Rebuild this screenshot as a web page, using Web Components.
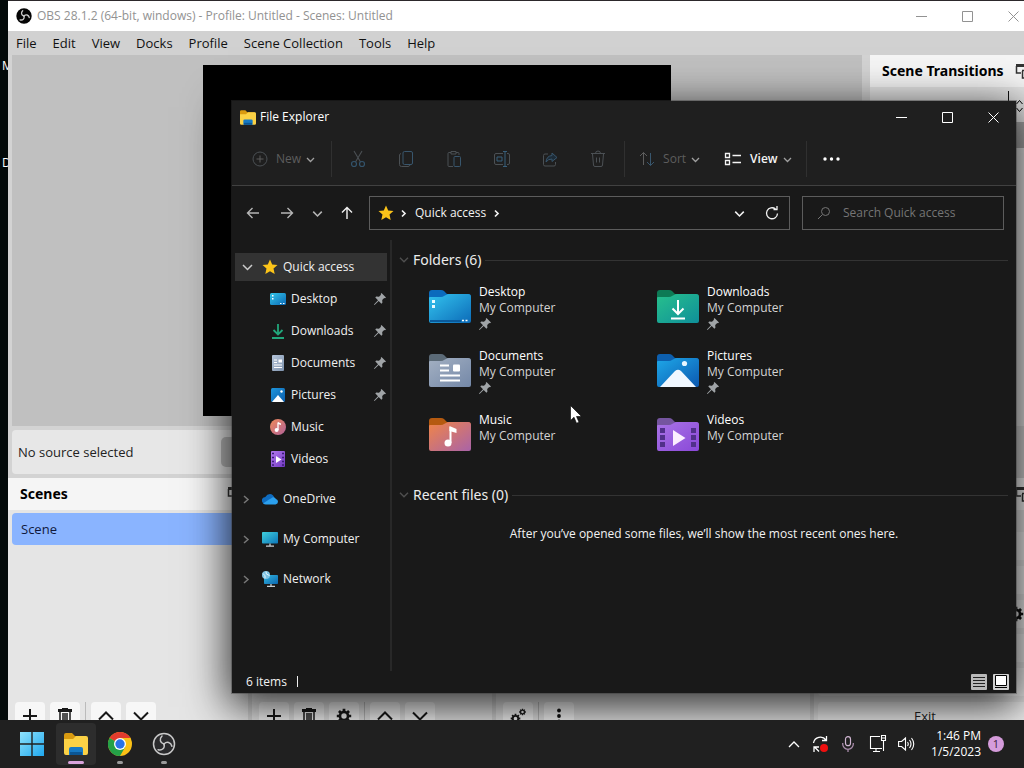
<!DOCTYPE html>
<html lang="en">
<head>
<meta charset="utf-8">
<meta name="viewport" content="width=device-width, initial-scale=1">
<title>Desktop</title>
<style>
  html, body { height: 100%; }
  body { margin: 0; background: #000; overflow: hidden; font: 12px/16px "Open Sans", "Noto Sans", sans-serif; }
</style>
</head>
<body>
<desktop-shell></desktop-shell>
<script>
const RESET = `
  *, *::before, *::after { box-sizing: border-box; }
  button, input { font: inherit; color: inherit; background: none; border: 0; margin: 0; padding: 0; }
  button { display: flex; align-items: center; justify-content: center; white-space: nowrap; }
  a { color: inherit; text-decoration: none; }
`;

function define(name, css, html) {
  const template = document.createElement('template');
  const render = el => {
    template.innerHTML = `<style>${RESET}${css}</style>${typeof html === 'function' ? html(el) : html}`;
    el.shadowRoot.append(template.content.cloneNode(true));
  };
  customElements.define(name, class extends HTMLElement {
    connectedCallback() {
      if (this.shadowRoot) return;
      this.attachShadow({ mode: 'open' });
      render(this);
    }
  });
}

/* ---------- icons: name -> [width, height, markup] ---------- */
const line = (d, w = 1, extra = '') => `<path d="${d}" fill="none" stroke="currentColor" stroke-width="${w}" ${extra}/>`;
const grad = (id, a, b) => `<linearGradient id="${id}" x1="0" y1="0" x2="1" y2="1"><stop offset="0" stop-color="${a}"/><stop offset="1" stop-color="${b}"/></linearGradient>`;
const folder = (tab, a, b, inner) => [43, 34, `
  <defs>${grad('g', a, b)}</defs>
  <path d="M1 3q0-3 3-3h9q2 0 3 1l3 3h21q3 0 3 3v6H1z" fill="${tab}"/>
  <path d="M1 8q0-1 1-1h11q2 0 3-1l2-1q1-1 3-1h19q3 0 3 3v24q0 2-2 2H3q-2 0-2-2z" fill="url(#g)"/>${inner}`];
const obsBlades = (c, w) => `<g fill="none" stroke="${c}" stroke-width="${w}" stroke-linecap="round">
  <path d="M12 12c-4-1-5-5-2-8"/><path d="M12 12c-4-1-5-5-2-8" transform="rotate(120 12 12)"/><path d="M12 12c-4-1-5-5-2-8" transform="rotate(240 12 12)"/></g>`;
const gear = (x, y, s) => `<g transform="translate(${x} ${y}) scale(${s})"><circle r="4.5" fill="none" stroke="currentColor" stroke-width="3"/>
  <path d="M0-8v3M0 8V5M-8 0h3M8 0H5M-5.6-5.6l2 2M5.6 5.6l-2-2M-5.6 5.6l2-2M5.6-5.6l-2 2" stroke="currentColor" stroke-width="3"/></g>`;

const ICONS = {
  minimize: [11, 11, line('M0 5.5h11')],
  maximize: [11, 11, line('M.5.5h10v10H.5z')],
  close: [11, 11, line('M.5.5l10 10M10.5.5l-10 10')],
  chevDown: [9, 9, line('M1 3l3.5 3.5L8 3', 1.3)],
  chevRight: [9, 9, line('M3 1.5l3 3-3 3', 1.7)],
  treeRight: [9, 11, line('M2 2l4 3.5L2 9', 1.5)],
  treeDown: [11, 9, line('M1 2l4.5 4.5L10 2', 1.5)],
  chevUp: [12, 12, line('M1 9l5-5 5 5', 1.3)],
  back: [14, 14, line('M13 7H1.5M6.5 2l-5 5 5 5', 1.4)],
  forward: [14, 14, line('M1 7h11.500M7.500 2l5 5-5 5', 1.4)],
  up: [14, 14, line('M7 13V1.500M2 6.500l5-5 5 5', 1.4)],
  refresh: [16, 16, line('M13.500 8.500A5.500 5.500 0 1 1 11.500 4M9.500 4.500h3.500V1', 1.3)],
  search: [14, 14, line('M1 13l4-4M12.500 5.500a4 4 0 1 1-8 0 4 4 0 0 1 8 0z')],
  star: [16, 16, '<path d="M8 .5l2.200 5 5.300.5-4 3.600 1.200 5.400L8 12.200 3.300 15l1.200-5.400-4-3.600 5.300-.5z" fill="#fcc419"/>'],
  pin: [12, 12, '<path d="M7.500 0L12 4.500l-1 .8-.8-.2-2 2 .2 2.700-1 .9L4.700 8 .8 11.800 0 12l.2-.8L4 7.300 1.300 4.600l.9-1L5 3.800l2-2-.3-.8z" fill="#a0a4a7"/>'],
  plusCircle: [16, 16, `<circle cx="8" cy="8" r="7" fill="none" stroke="#4b5054"/>` + line('M8 4.500v7M4.500 8h7')],
  cut: [16, 18, line('M4 1l6.500 11M12 1L5.500 12', 1.1) + '<g fill="none" stroke="#33536b" stroke-width="1.200"><circle cx="4" cy="14" r="2.500"/><circle cx="12" cy="14" r="2.500"/></g>'],
  copy: [16, 18, '<rect x="5" y="1.500" width="9.500" height="13" rx="1.500" fill="none" stroke="#38566d"/>' + line('M3 3.500Q1.500 4 1.500 5v9.500q0 2 2 2H10q1.500 0 2-1.500')],
  paste: [16, 18, line('M5 2.500H3q-1 0-1 1v12q0 1 1 1h4M10 2.500h2q1 0 1 1V5M5 1.500h5v2.500H5z') + '<rect x="8" y="6.500" width="6.500" height="10" rx="1" fill="none" stroke="#38566d"/>'],
  rename: [18, 16, line('M10 2.500H3q-1.500 0-1.500 1.500v8q0 1.500 1.500 1.500h7M14 2.500h1q1.500 0 1.500 1.500v8q0 1.500-1.500 1.500h-1') + '<path d="M10 .5h4M12 .5v15M10 15.500h4M4 6h5v4H4z" fill="none" stroke="#38607c"/>'],
  share: [16, 16, line('M6 3H3Q1.500 3 1.500 4.500v9Q1.500 15 3 15h9q1.500 0 1.500-1.500V11') + '<path d="M10 2l5 4.500-5 4V8Q6 8 4 11q.5-6 6-6.500z" fill="#1d2c38" stroke="#38566d"/>'],
  trash: [16, 18, line('M1 3.500h14M5.500 3.500q0-2.500 2.500-2.500t2.500 2.500M2.500 4l1 11q0 1.500 1.500 1.500h6q1.500 0 1.500-1.500l1-11M6.500 7.500v5M9.500 7.500v5')],
  sort: [16, 16, line('M4.500 14V1.500M1 5l3.500-3.500L8 5') + '<path d="M11.500 2v12.500M8 11l3.500 3.500L15 11" fill="none" stroke="#38566d"/>'],
  view: [18, 14, line('M1.500 1.500h4v4h-4zM1.500 8.500h4v4h-4zM8.500 3.500H17M8.500 10.500H17', 1.3)],
  dots: [17, 4, '<g fill="currentColor"><circle cx="2" cy="2" r="1.700"/><circle cx="8.500" cy="2" r="1.700"/><circle cx="15" cy="2" r="1.700"/></g>'],

  explorer: [24, 22, `<path d="M0 2q0-2 2-2h6l3 3h11v6H0z" fill="#d99a10"/><path d="M0 6h9l3-3h10q2 0 2 2v15q0 2-2 2H2q-2 0-2-2z" fill="#fbd145"/><path d="M5 22v-6q0-2 2-2h10q2 0 2 2v6z" fill="#1679c4"/><path d="M6 19h12v3H6z" fill="#0b5694"/>`],
  desktop: [16, 16, `<defs>${grad('g', '#35c6e8', '#0a69b7')}</defs><rect y="2" width="16" height="12" rx="1.500" fill="url(#g)"/><path d="M2 4h1.500v1.500H2zM2 7h1.500v1.500H2zM10 12h1.500v1H10zM13 12h1.500v1H13z" fill="#fff"/>`],
  downloads: [16, 16, '<path d="M8 1v10M3.500 7L8 11.500 12.500 7M2 15h12" fill="none" stroke="#22a67b" stroke-width="1.800"/>'],
  documents: [16, 16, `<defs>${grad('g', '#b5c5da', '#7f93ad')}</defs><rect x="2" width="12" height="16" rx="1" fill="url(#g)"/><path d="M4 5h3M4 7.500h3M4 10h8M4 12.500h8M8.500 5H12M8.500 6H12M8.500 7H12" stroke="#fff" stroke-width="1.200"/>`],
  pictures: [16, 16, `<defs>${grad('g', '#1e96dd', '#0b5dab')}</defs><rect x="1" y="1" width="14" height="14" rx="1.500" fill="url(#g)"/><path d="M2 15l6-7 6 7z" fill="#fff"/><circle cx="11.500" cy="4.500" r="1.200" fill="#fff"/>`],
  music: [16, 16, `<defs>${grad('g', '#f08a58', '#b0629a')}</defs><circle cx="8" cy="8" r="8" fill="url(#g)"/><path d="M8 3.500V11" stroke="#fff" stroke-width="1.300"/><path d="M8 3l3 1.500V6L8 5z" fill="#fff"/><circle cx="6.600" cy="11" r="2" fill="#fff"/>`],
  videos: [16, 16, `<defs>${grad('g', '#b479f0', '#7038c0')}</defs><rect x="1" width="14" height="16" rx="1" fill="url(#g)"/><path d="M6 5l5.500 3.500L6 12z" fill="#fff"/><path d="M2 2.500h2M2 6.500h2M2 10.500h2M2 14h2M12 2.500h2M12 6.500h2M12 10.500h2M12 14h2" stroke="#3b1c78" stroke-width="1.600"/>`],
  onedrive: [16, 16, '<path d="M3.500 13a3.500 3.500 0 0 1-.2-7Q5 3 8 3t4.300 3.500L8 13z" fill="#0f6cc0"/><path d="M4 13.500q-1.500 0-3-1l6-4 2-1q3-2.500 5 .5 2 .5 2 2.700t-2.500 2.800z" fill="#2ba0ee"/>'],
  computer: [16, 16, `<defs>${grad('g', '#3fd0dd', '#0d76b9')}</defs><rect y="1" width="16" height="11.500" rx=".8" fill="url(#g)"/><path d="M8 12.500V15M4 15.200h8" stroke="#c5cdd2" stroke-width="1.300"/>`],
  network: [16, 16, `<defs>${grad('g', '#33b8e0', '#0b66b0')}</defs><rect x="2" y="4" width="14" height="9" rx=".8" fill="url(#g)"/><path d="M9 13v2M5 15.300h8" stroke="#c5cdd2" stroke-width="1.300"/><circle cx="4" cy="4" r="4" fill="#7fc4e4"/><path d="M1 2.500q3 2 2 5M4 .5q-1 3 3.500 4" stroke="#e6f6fc" fill="none"/>`],

  bigDesktop: folder('#0b6bbd', '#33c3ee', '#0c6bb8', '<path d="M4 10h3v3H4zM4 15h3v3H4z" fill="#e9faff"/><path d="M2 31h31" stroke="#0a5a9b" stroke-width="2"/><path d="M34 30.500h2M37.500 30.500h2" stroke="#fff" stroke-width="1.500"/>'),
  bigDownloads: folder('#0d7a55', '#27c08c', '#0f8f9a', '<path d="M22 10v14M16.500 18.500L22 24l5.500-5.500M15 28.500h14" fill="none" stroke="#fff" stroke-width="2"/>'),
  bigDocuments: folder('#5b6a77', '#a3b0c2', '#7488a8', '<path d="M12 11.500h9M12 16.500h9M12 21.500h20M12 26.500h20" stroke="#fff" stroke-width="2"/><rect x="25" y="10.500" width="7" height="7" rx="1" fill="#fff"/>'),
  bigPictures: folder('#0d5fae', '#1ea8e8', '#0c58b0', '<path d="M4 33l15-16q3-2.500 6 0l15 16z" fill="#f0f7ff"/><circle cx="28.500" cy="9.500" r="2.600" fill="#e8f6ff"/>'),
  bigMusic: folder('#b55a10', '#f08548', '#a963a8', '<circle cx="20" cy="25" r="3.500" fill="#fff"/><path d="M22.500 25V9" stroke="#fff" stroke-width="2"/><path d="M21.500 8l7 3v4l-7-2z" fill="#fff"/>'),
  bigVideos: folder('#75559f', '#a974e6', '#8a48d8', '<path d="M17 12l12.500 8L17 28z" fill="#fbeeff"/><path d="M4 10h5v5H4zM4 17h5v5H4zM4 24h5v5H4zM35 10h5v5h-5zM35 17h5v5h-5zM35 24h5v5h-5z" fill="#51308a"/>'),

  listView: [16, 16, '<rect width="16" height="16" rx="1" fill="#b9b9b9"/><path d="M2 3.500h12M2 6.500h12M2 9.500h12M2 12.500h12" stroke="#222"/>'],
  tileView: [16, 16, '<rect width="16" height="16" rx="1" fill="#d0d0d0"/><path d="M2.500 1.500h11v10h-11z" fill="#fff" stroke="#000"/><path d="M2 13.500h12" stroke="#000"/>'],

  obs: [16, 16, `<g transform="scale(.667)"><circle cx="12" cy="12" r="11.500" fill="#050505"/>${obsBlades('#c8c8c8', 2)}</g>`],
  obsTask: [24, 24, `<circle cx="12" cy="12" r="10.500" fill="#2a2a2c" stroke="#c9c9c9" stroke-width="1.500"/>${obsBlades('#c9c9c9', 1.5)}`],
  undock: [16, 16, line('M1 2.500h12', 3) + line('M1.500 3v7H6M13.500 3v3M7 7.500h9M7.500 8v7H15', 1.5)],
  plus: [16, 16, line('M8 1v14M1 8h14', 2)],
  bin: [16, 16, line('M1 2.500h14', 3) + line('M5 1h6', 2) + line('M3 4v12M6 5v10M8 5v10M10 5v10M13 4v12M3 15h10', 1.5)],
  moveUp: [16, 16, line('M1 11.500l7-7 7 7', 2)],
  moveDown: [16, 16, line('M1 4.500l7 7 7-7', 2)],
  gear: [16, 16, gear(8, 8, .9)],
  gears: [16, 16, gear(5.5, 10.5, .6) + gear(12.5, 4, .42)],
  kebab: [4, 16, '<g fill="#111"><circle cx="2" cy="2.500" r="1.900"/><circle cx="2" cy="8" r="1.900"/><circle cx="2" cy="13.500" r="1.900"/></g>'],
  spin: [9, 14, line('M1.500 5l3-3.500 3 3.500M1.500 9l3 3.500 3-3.500')],

  start: [24, 24, `<defs>${grad('g', '#8fe3fc', '#1fa7ee')}</defs><path d="M0 0h11.300v11.300H0zM12.700 0H24v11.300H12.700zM0 12.700h11.300V24H0zM12.700 12.700H24V24H12.700z" fill="url(#g)"/>`],
  chrome: [24, 24, '<circle cx="12" cy="12" r="12" fill="#fbc116"/><path d="M12 12L1.600 6A12 12 0 0 1 22.400 6z" fill="#e33b2e"/><path d="M1.600 6A12 12 0 0 0 12 24l5.200-9L12 12z" fill="#24a148"/><path d="M12 6h10.400a12 12 0 0 1 .8 2L17 15z" fill="#fbc116"/><circle cx="12" cy="12" r="6" fill="#fff"/><circle cx="12" cy="12" r="4.700" fill="#2a72e8"/>'],
  sync: [17, 18, line('M1.500 8A7 7 0 0 1 14 5M14.500 1v4.500H10M2 17v-5h5M2.500 12l4.500 4.500', 1.3) + '<circle cx="12" cy="13" r="4" fill="#f00f0f"/>'],
  mic: [12, 16, '<rect x="3.500" y=".7" width="5" height="9" rx="2.500" fill="none" stroke="#d0b6d2" stroke-width="1.200"/><path d="M.7 7v1a5.300 5.300 0 0 0 10.600 0V7M6 13v3" fill="none" stroke="#a98cab" stroke-width="1.300"/>'],
  monitor: [18, 18, line('M11 1.500H1.500v12H13M7 14v3M4 16.500h7M12.500.5h4v5h-4zM12.500 3h4M14.500 6v10', 1.1)],
  speaker: [17, 16, line('M.6 5.500h3L7.500 2v12L3.600 10.500h-3zM9.500 6q1.500 2 0 4M11.500 4q3 4 0 8M13.500 2q4.500 6 0 12', 1.1)],
  cursor: [12, 20, '<path d="M.5.5v15l3.500-3.300 2.500 6 2.500-1-2.500-5.700h5z" fill="#fff" stroke="#000" stroke-width=".6"/>'],
};

define('ui-icon', ':host{display:inline-flex;flex:none} svg{display:block}', el => {
  const [w, h, body] = ICONS[el.getAttribute('name')];
  const width = Number(el.getAttribute('width') || w);
  return `<svg viewBox="0 0 ${w} ${h}" width="${width}" height="${Math.round(h * width / w)}" aria-hidden="true">${body}</svg>`;
});

define('window-controls', `
  :host { display: flex; align-self: stretch; }
  button { width: 46px; }`,
  `<button aria-label="Minimize"><ui-icon name="minimize"></ui-icon></button>
   <button aria-label="Maximize"><ui-icon name="maximize"></ui-icon></button>
   <button aria-label="Close"><ui-icon name="close"></ui-icon></button>`);

/* ---------- OBS ---------- */
define('obs-dock', `
  :host { display: flex; flex-direction: column; min-width: 0; background: #e5e5e5; color: #000; }
  header { display: flex; align-items: center; justify-content: space-between; height: 32px; padding: 0 5px 0 12px; background: #f5f5f5; }
  h2 { margin: 0; font: 700 14px/20px "Noto Sans", sans-serif; white-space: nowrap; }
  ui-icon { color: #333; }
  .body { flex: 1; display: flex; flex-direction: column; padding: 3px 4px 4px; }`,
  el => `<header><h2>${el.getAttribute('label') || ''}</h2><ui-icon name="undock"></ui-icon></header>
   <div class="body"><slot></slot></div>`);

define('obs-toolbar', `
  :host { display: flex; gap: 5px; margin-top: auto; padding-left: 3px; color: #181818; }
  button { width: 30px; height: 28px; border-radius: 4px; background: #f7f7f7; }
  i { width: 1px; background: #bbb; }`,
  el => el.getAttribute('items').split(' ').map(n => n === '|' ? '<i></i>' : `<button aria-label="${n}"><ui-icon name="${n}"></ui-icon></button>`).join(''));

define('obs-window', `
  :host { display: grid; grid-template-rows: 30px 24px 371px 44px minmax(0, 1fr); background: #d3d3d3; border-top: 1px solid #2c282b; font-size: 13px; line-height: 18px; }
  .title { display: flex; align-items: center; gap: 5px; padding-left: 8px; background: #fff; color: #929292; font-size: 12px; }
  .title span { flex: 1; white-space: nowrap; }
  nav { display: flex; align-items: center; gap: 16px; padding: 0 8px; background: #d1d1d1; color: #111; }
  .stage { display: grid; grid-template-columns: minmax(0, 1fr) 166px; column-gap: 8px; padding-left: 4px; }
  .preview { display: flex; justify-content: center; padding: 10px 0; background: #c0c0c0; }
  .canvas { aspect-ratio: 4 / 3; height: 100%; background: #000; }
  .combo { display: flex; justify-content: flex-end; align-items: center; height: 32px; padding-right: 8px; }
  .combo i { width: 1px; height: 18px; margin: 0 6px 12px 0; background: #111; }
  .strip { height: 26px; background: #a8a8a8; margin: 0 -4px; }
  .source { display: flex; align-items: center; justify-content: space-between; margin: 4px 174px -4px 4px; padding: 0 6px; border-radius: 4px; background: #e7e7e7; color: #222; }
  .source button { width: 90px; height: 30px; margin-right: 545px; border-radius: 5px; background: #b9b9b9; }
  .docks { display: grid; grid-template-columns: 240px 240px minmax(0, 1fr) 222px; column-gap: 4px; margin-top: 8px; }
  .scene { display: block; height: 32px; padding: 7px 9px; border-radius: 4px; background: #8ab4ff; color: #10183c; }
  .controls { display: flex; flex-direction: column; gap: 6px; margin-top: auto; }
  .controls div { display: flex; gap: 4px; }
  .controls button { flex: none; height: 28px; border-radius: 4px; background: #f0f0f0; color: #222; }
  .controls div button { flex: 1; }
  .controls .small { flex: 0 0 32px; color: #111; }`,
  `<div class="title"><ui-icon name="obs"></ui-icon><span>OBS 28.1.2 (64-bit, windows) - Profile: Untitled - Scenes: Untitled</span><window-controls></window-controls></div>
   <nav><a href="#">File</a><a href="#">Edit</a><a href="#">View</a><a href="#">Docks</a><a href="#">Profile</a><a href="#">Scene Collection</a><a href="#">Tools</a><a href="#">Help</a></nav>
   <div class="stage">
     <div class="preview"><div class="canvas"></div></div>
     <obs-dock label="Scene Transitions"><div class="combo"><i></i><ui-icon name="spin"></ui-icon></div><div class="strip"></div></obs-dock>
   </div>
   <div class="source"><span>No source selected</span><button aria-label="Properties"></button></div>
   <div class="docks">
     <obs-dock label="Scenes"><a class="scene" href="#">Scene</a><obs-toolbar items="plus bin | moveUp moveDown"></obs-toolbar></obs-dock>
     <obs-dock><obs-toolbar items="plus bin gear | moveUp moveDown"></obs-toolbar></obs-dock>
     <obs-dock><obs-toolbar items="gears | kebab"></obs-toolbar></obs-dock>
     <obs-dock><div class="controls">
       <button aria-label="Start Streaming"></button><button aria-label="Start Recording"></button>
       <div><button aria-label="Start Virtual Camera"></button><button class="small" aria-label="Configure"><ui-icon name="gear"></ui-icon></button></div>
       <button aria-label="Studio Mode"></button><button aria-label="Settings"></button><button>Exit</button></div></obs-dock>
   </div>`);

/* ---------- File Explorer ---------- */
define('command-bar', `
  :host { display: flex; align-items: center; padding-left: 8px; height: 53px; border-bottom: 1px solid #414141; background: #1f1f1f; color: #5d5d5d; }
  button { height: 36px; }
  .menu { padding: 0 12px; gap: 8px; }
  .menu ui-icon:last-child { margin-left: -3px; color: #a0a0a0; }
  .tool { width: 48px; color: #4b5054; }
  .on { color: #f4f4f4; font-weight: 600; }
  .more { width: 46px; color: #fff; }
  i { width: 1px; height: 36px; margin: 0 2px; background: #303030; }
  i:first-of-type { margin-left: 4px; }`,
  `<button class="menu"><ui-icon name="plusCircle"></ui-icon>New<ui-icon name="chevDown"></ui-icon></button><i></i>
   ${['cut', 'copy', 'paste', 'rename', 'share', 'trash'].map(n => `<button class="tool" aria-label="${n}"><ui-icon name="${n}"></ui-icon></button>`).join('')}
   <i></i><button class="menu"><ui-icon name="sort"></ui-icon>Sort<ui-icon name="chevDown"></ui-icon></button>
   <button class="menu on"><ui-icon name="view"></ui-icon>View<ui-icon name="chevDown"></ui-icon></button><i></i>
   <button class="more" aria-label="More"><ui-icon name="dots"></ui-icon></button>`);

define('address-row', `
  :host { display: flex; align-items: center; height: 54px; padding: 0 12px 0 4px; color: #f2f2f2; }
  button { width: 34px; height: 32px; color: #b5b5b5; }
  .narrow { width: 26px; }
  .up, .address button { color: #f2f2f2; }
  .address, .search { display: flex; align-items: center; height: 34px; border: 1px solid #5c5c5c; }
  .address { flex: 1; min-width: 0; margin: 0 12px 0 5px; padding: 0 3px 0 8px; gap: 5px; }
  .address a { margin: 0 1px 0 2px; }
  .address button { width: 28px; }
  .spacer { flex: 1; }
  .search { width: 202px; padding: 0 14px; gap: 12px; color: #757575; }
  input { width: 100%; min-width: 0; outline: 0; }
  input::placeholder { color: #757575; opacity: 1; }`,
  `<button aria-label="Back"><ui-icon name="back"></ui-icon></button>
   <button aria-label="Forward"><ui-icon name="forward"></ui-icon></button>
   <button class="narrow" aria-label="Recent locations"><ui-icon name="chevDown" width="11"></ui-icon></button>
   <button class="up" aria-label="Up"><ui-icon name="up"></ui-icon></button>
   <div class="address"><ui-icon name="star"></ui-icon><ui-icon name="chevRight"></ui-icon><a href="#">Quick access</a><ui-icon name="chevRight"></ui-icon>
     <span class="spacer"></span><button aria-label="Previous locations"><ui-icon name="chevDown" width="11"></ui-icon></button><button aria-label="Refresh"><ui-icon name="refresh"></ui-icon></button></div>
   <label class="search"><ui-icon name="search"></ui-icon><input type="search" placeholder="Search Quick access" aria-label="Search Quick access"></label>`);

define('tree-item', `
  :host { display: block; padding: 2px 3px; }
  :host([root]:not([open])) { margin-top: 8px; }
  a { display: flex; align-items: center; height: 28px; gap: 5px; padding: 0 1px 0 35px; color: #f0f0f0; white-space: nowrap; }
  :host([root]) a { padding-left: 7px; }
  :host([open]) a { background: #333; }
  .arrow { display: flex; width: 15px; color: #777; }
  :host([open]) .arrow { color: #ccc; }
  span { flex: 1; }`,
  el => `<a href="#">${el.hasAttribute('root') ? `<i class="arrow"><ui-icon name="${el.hasAttribute('open') ? 'treeDown' : 'treeRight'}"></ui-icon></i>` : ''}
    <ui-icon name="${el.getAttribute('icon')}"></ui-icon><span><slot></slot></span>${el.hasAttribute('pinned') ? '<ui-icon name="pin"></ui-icon>' : ''}</a>`);

define('folder-tile', `
  :host { display: block; }
  a { display: flex; gap: 8px; color: #d4d4d4; }
  .art { padding-top: 6px; }
  .text { display: grid; grid-auto-rows: 16px; align-items: center; white-space: nowrap; }
  .name { color: #fff; }`,
  el => `<a href="#"><ui-icon class="art" name="${el.getAttribute('icon')}"></ui-icon>
    <div class="text"><span class="name"><slot></slot></span><span>My Computer</span>${el.hasAttribute('pinned') ? '<ui-icon name="pin"></ui-icon>' : ''}</div></a>`);

define('group-heading', `
  :host { display: flex; align-items: center; gap: 4px; height: 24px; padding: 0 8px 0 7px; color: #505050; }
  h2 { margin: 0; font: 400 14px/20px "Noto Sans", sans-serif; color: #ececec; white-space: nowrap; }
  i { flex: 1; height: 1px; background: #333; }`,
  `<ui-icon name="treeDown" width="10"></ui-icon><h2><slot></slot></h2><i></i>`);

define('explorer-window', `
  :host { display: flex; flex-direction: column; background: #191919; color: #f2f2f2; box-shadow: 0 0 0 1px #3a3a3a66, 0 10px 40px 4px #000c; }
  .title { display: flex; align-items: center; gap: 4px; height: 32px; padding-left: 8px; background: #1f1f1f; color: #fff; }
  .title span { flex: 1; }
  .main { flex: 1; min-height: 0; display: grid; grid-template-columns: 160px minmax(0, 1fr); }
  aside { border-right: 2px solid #282828; padding-top: 11px; }
  .grid { display: grid; grid-template-columns: repeat(auto-fill, 228px); grid-auto-rows: 64px; padding: 12px 0 0 36px; margin-bottom: 7px; }
  section { padding-top: 8px; }
  p { margin: 19px 0 0; text-align: center; }
  footer { display: flex; align-items: center; height: 22px; padding: 0 7px 0 14px; gap: 6px; }
  footer span { flex: 1; }
  footer span::after { content: ""; display: inline-block; width: 1px; height: 11px; margin-left: 10px; background: #eee; vertical-align: -1px; }`,
  `<div class="title"><ui-icon name="explorer" width="16"></ui-icon><span>File Explorer</span><window-controls></window-controls></div>
   <command-bar></command-bar>
   <address-row></address-row>
   <div class="main">
     <aside>
       <tree-item root open icon="star">Quick access</tree-item>
       <tree-item icon="desktop" pinned>Desktop</tree-item>
       <tree-item icon="downloads" pinned>Downloads</tree-item>
       <tree-item icon="documents" pinned>Documents</tree-item>
       <tree-item icon="pictures" pinned>Pictures</tree-item>
       <tree-item icon="music">Music</tree-item>
       <tree-item icon="videos">Videos</tree-item>
       <tree-item root icon="onedrive">OneDrive</tree-item>
       <tree-item root icon="computer">My Computer</tree-item>
       <tree-item root icon="network">Network</tree-item>
     </aside>
     <section>
       <group-heading>Folders (6)</group-heading>
       <div class="grid">
         <folder-tile icon="bigDesktop" pinned>Desktop</folder-tile>
         <folder-tile icon="bigDownloads" pinned>Downloads</folder-tile>
         <folder-tile icon="bigDocuments" pinned>Documents</folder-tile>
         <folder-tile icon="bigPictures" pinned>Pictures</folder-tile>
         <folder-tile icon="bigMusic">Music</folder-tile>
         <folder-tile icon="bigVideos">Videos</folder-tile>
       </div>
       <group-heading>Recent files (0)</group-heading>
       <p>After you’ve opened some files, we’ll show the most recent ones here.</p>
     </section>
   </div>
   <footer><span>6 items</span><button aria-label="Details"><ui-icon name="listView"></ui-icon></button><button aria-label="Large icons"><ui-icon name="tileView"></ui-icon></button></footer>`);

/* ---------- taskbar ---------- */
define('task-button', `
  :host { display: block; }
  button { position: relative; width: 40px; height: 42px; border-radius: 4px; }
  :host([active]) button { background: #2d2d2d; }
  i { position: absolute; bottom: 1px; left: 17px; width: 6px; height: 3px; border-radius: 2px; background: #9a9a9a; }
  :host([active]) i { left: 12px; width: 16px; background: #d9a3dc; }`,
  el => `<button aria-label="${el.getAttribute('icon')}"><ui-icon name="${el.getAttribute('icon')}"></ui-icon>${el.hasAttribute('running') ? '<i></i>' : ''}</button>`);

define('task-bar', `
  :host { display: flex; align-items: center; gap: 4px; padding: 0 20px 0 12px; background: #202020; color: #fff; }
  .tray { display: flex; align-items: center; margin-left: auto; }
  .tray button { width: 26px; height: 32px; }
  .tray .wide { width: 30px; }
  time { margin: 0 7px 0 12px; text-align: right; }
  .badge { width: 16px; height: 16px; border-radius: 50%; background: #d59cdb; color: #3a2140; font-size: 11px; text-align: center; }`,
  `<task-button icon="start"></task-button><task-button icon="explorer" active running></task-button>
   <task-button icon="chrome" running></task-button><task-button icon="obsTask" running></task-button>
   <div class="tray"><button aria-label="Hidden icons"><ui-icon name="chevUp"></ui-icon></button>
     <button aria-label="Updates"><ui-icon name="sync"></ui-icon></button>
     <button class="wide" aria-label="Microphone"><ui-icon name="mic"></ui-icon></button>
     <button class="wide" aria-label="Network"><ui-icon name="monitor"></ui-icon></button>
     <button aria-label="Volume"><ui-icon name="speaker"></ui-icon></button>
     <time>1:46 PM<br>1/5/2023</time><span class="badge">1</span></div>`);

define('desktop-shell', `
  :host { display: grid; grid-template-rows: minmax(0, 1fr) 48px; height: 100vh; background: #030a0a; }
  .desktop { position: relative; overflow: hidden; }
  .labels { display: grid; grid-auto-rows: 97px; width: 8px; padding: 58px 0 0 2px; overflow: hidden; color: #fff; }
  obs-window { position: absolute; inset: 0 -12px -14px 8px; }
  explorer-window { position: absolute; inset: 101px 8px 27px 232px; }
  .cursor { position: absolute; left: 570px; top: 405px; }`,
  `<div class="desktop">
     <div class="labels"><span>M</span><span>D</span></div>
     <obs-window></obs-window>
     <explorer-window></explorer-window>
     <ui-icon class="cursor" name="cursor"></ui-icon>
   </div>
   <task-bar></task-bar>`);
</script>
</body>
</html>
